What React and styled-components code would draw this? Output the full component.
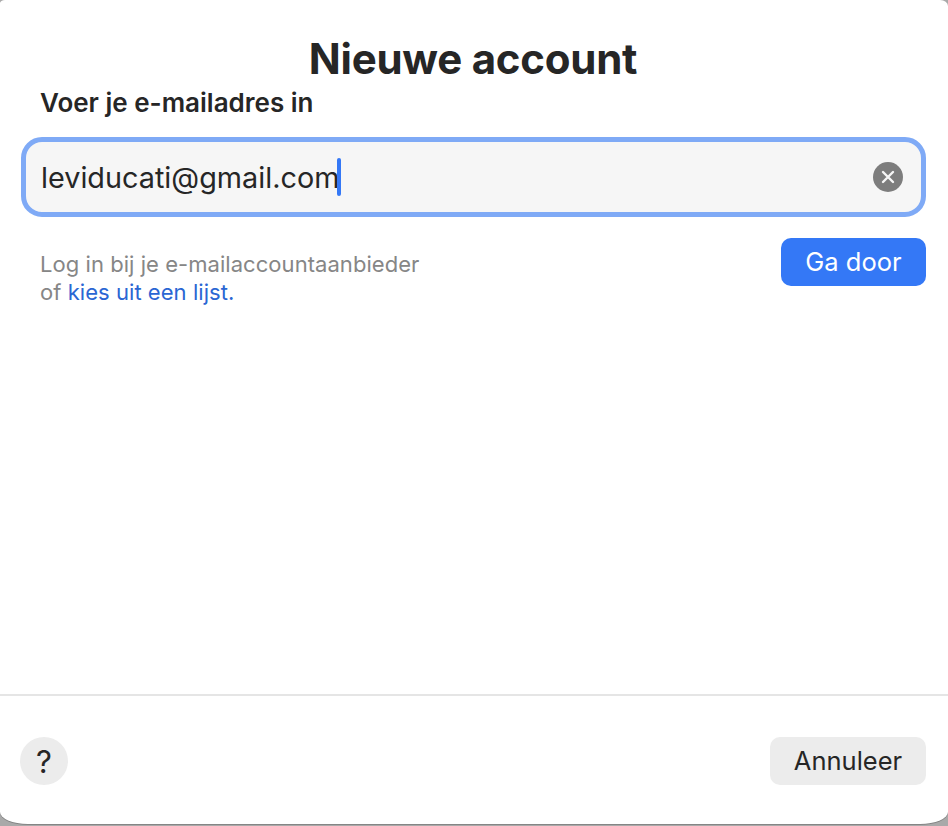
import React from "react";
import styled, { createGlobalStyle } from "styled-components";

const Global = createGlobalStyle`
  html, body { margin: 0; padding: 0; width: 948px; height: 826px; overflow: hidden; background: #a9a9a9; }
  #root { width: 948px; height: 826px; }
  * { box-sizing: border-box; }
`;

const Sheet = styled.div`
  width: 948px;
  height: 824px;
  background: #fff;
  border-radius: 5px 8px 28px 28px / 3px 6px 12px 12px;
  box-shadow: 0 1px 0 #858585;
  font-family: Inter, "Liberation Sans", sans-serif;
  color: #262626;
  display: flex;
  flex-direction: column;
  -webkit-font-smoothing: antialiased;
`;

const Body = styled.main`
  flex: 1;
  display: flex;
  flex-direction: column;
  padding: 34px 22px 0;
`;

const Title = styled.h1`
  margin: 0;
  padding-right: 2px;
  font-size: 42px;
  line-height: 50px;
  font-weight: 700;
  letter-spacing: -0.25px;
  text-align: center;
`;

const Label = styled.label`
  display: block;
  margin: 5px 0 0 18px;
  font-size: 26px;
  line-height: 28px;
  font-weight: 600;
`;

const Field = styled.div`
  margin-top: 20px;
  height: 80px;
  width: 905px;
  margin-left: -1px;
  padding: 0 18px 0 15px;
  display: flex;
  align-items: center;
  justify-content: space-between;
  background: #f6f6f6;
  border: 5px solid #7faaf6;
  border-radius: 21px;
  font-size: 28.8px;
`;

const Value = styled.span`
  display: inline-flex;
  align-items: center;
`;

const Caret = styled.i`
  display: inline-block;
  width: 4px;
  height: 38px;
  margin-left: -2px;
  border-radius: 2px;
  background: #3478f6;
`;

const ClearIcon = styled.svg`
  width: 30px;
  height: 30px;
  flex: none;
`;

const Row = styled.div`
  margin-top: 21px;
  display: flex;
  justify-content: space-between;
  align-items: flex-start;
`;

const Hint = styled.p`
  margin: 12px 0 0 18px;
  font-size: 22px;
  line-height: 28px;
  letter-spacing: 0.05px;
  color: #868686;
`;

const Link = styled.a`
  color: #2a66d3;
`;

const Button = styled.button`
  font: inherit;
  font-size: 25.5px;
  height: 48px;
  border: 0;
  border-radius: 10px;
  padding: 0 0 1px;
  width: ${(p) => p.$w}px;
  background: ${(p) => (p.$primary ? "#3478f6" : "#ececec")};
  color: ${(p) => (p.$primary ? "#fff" : "#262626")};
`;

const Footer = styled.footer`
  height: 130px;
  border-top: 2px solid #e5e5e5;
  padding: 41px 22px 0 20px;
  display: flex;
  justify-content: space-between;
  align-items: flex-start;
`;

const Help = styled.button`
  width: 48px;
  height: 48px;
  border: 0;
  padding: 0;
  border-radius: 50%;
  background: #ececec;
  color: #262626;
  font-family: inherit;
  font-size: 31px;
  font-weight: 400;
`;

export default function App() {
  return (
    <>
      <Global />
      <Sheet>
        <Body>
          <Title>Nieuwe account</Title>
          <Label>Voer je e-mailadres in</Label>
          <Field>
            <Value>
              leviducati@gmail.com
              <Caret />
            </Value>
            <ClearIcon viewBox="0 0 30 30">
              <circle cx="15" cy="15" r="15" fill="#7d7d7d" />
              <path d="M10 10l10 10M20 10L10 20" stroke="#f6f6f6" strokeWidth="2.4" strokeLinecap="round" />
            </ClearIcon>
          </Field>
          <Row>
            <Hint>
              Log in bij je e-mailaccountaanbieder
              <br />
              of <Link>kies uit een lijst.</Link>
            </Hint>
            <Button $primary $w={145}>Ga door</Button>
          </Row>
        </Body>
        <Footer>
          <Help>?</Help>
          <Button $w={156}>Annuleer</Button>
        </Footer>
      </Sheet>
    </>
  );
}
